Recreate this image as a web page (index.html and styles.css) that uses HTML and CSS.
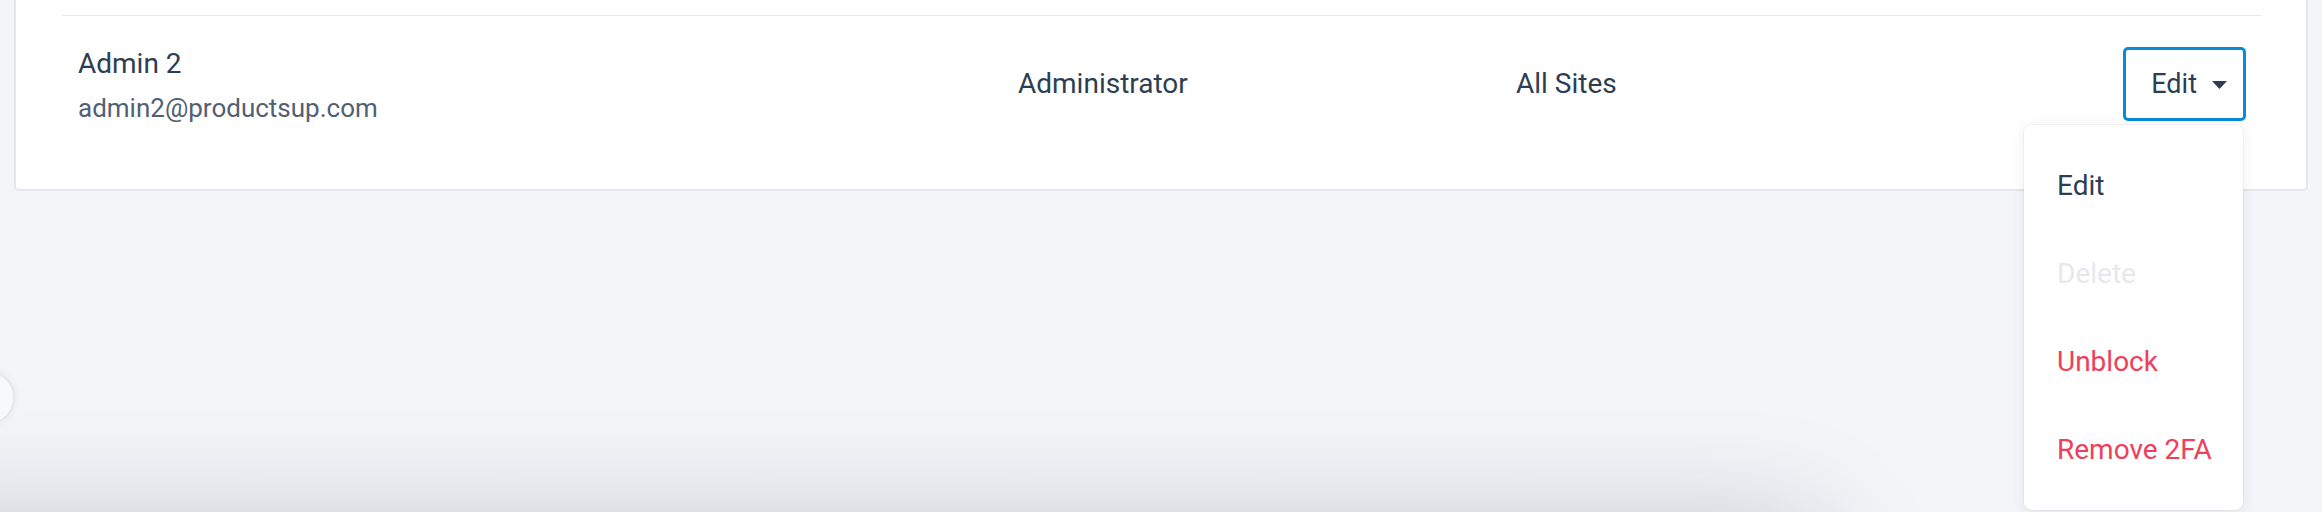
FILE: index.html
```html
<!DOCTYPE html>
<html lang="en">
<head>
<meta charset="utf-8">
<title>Users</title>
<link rel="stylesheet" href="styles.css">
</head>
<body>
<main class="page">
  <section class="card">
    <div class="row">
      <div class="cell user">
        <div class="name">Admin 2</div>
        <div class="email">admin2@productsup.com</div>
      </div>
      <div class="cell role">Administrator</div>
      <div class="cell sites">All Sites</div>
      <div class="cell actions">
        <div class="dropdown">
          <button class="btn" type="button">
            <span>Edit</span>
            <svg class="caret" width="15" height="8" viewBox="0 0 15 8" aria-hidden="true"><path d="M0 0 H15 L7.5 8 Z" fill="currentColor"/></svg>
          </button>
          <ul class="menu">
            <li class="item">Edit</li>
            <li class="item disabled">Delete</li>
            <li class="item danger">Unblock</li>
            <li class="item danger">Remove 2FA</li>
          </ul>
        </div>
      </div>
    </div>
  </section>
</main>
<button class="sidebar-toggle" type="button" aria-label="Toggle sidebar"></button>
<div class="bottom-shadow"></div>
</body>
</html>
```
FILE: styles.css
```css
html, body {
  margin: 0;
  padding: 0;
}
body {
  width: 2322px;
  height: 512px;
  overflow: hidden;
  background: #f3f5f9;
  font-family: Roboto, "Liberation Sans", Arial, sans-serif;
  color: #2c3d51;
  position: relative;
}
.page {
  padding: 0 14px 0 14px;
}
.card {
  background: #fff;
  border: 2px solid #e4e7eb;
  border-top: none;
  border-radius: 0 0 5px 5px;
  padding: 15px 45px 37px 46px;
}
.row {
  border-top: 1px solid #e6e8eb;
  height: 136px;
  padding: 0 15px 0 16px;
  display: grid;
  grid-template-columns: 940px 498px 1fr auto;
  align-items: center;
}
.cell {
  font-size: 28px;
  line-height: 36px;
}
.user {
  padding-top: 4px;
}
.name {
  font-size: 28px;
  line-height: 36px;
  color: #2e3e52;
}
.email {
  margin-top: 8px;
  font-size: 26px;
  line-height: 36px;
  color: #526073;
}
.role, .sites {
  color: #2e3e52;
}
.dropdown {
  position: relative;
}
.btn {
  display: flex;
  align-items: center;
  gap: 15px;
  height: 74px;
  padding: 0 16px 0 25px;
  background: #fff;
  border: 3px solid #0b8ad8;
  border-radius: 5px;
  font-family: inherit;
  font-size: 27px;
  color: #2e3e52;
}
.caret {
  display: block;
  margin-top: 2px;
}
.menu {
  position: absolute;
  top: calc(100% + 4px);
  right: 3px;
  width: 219px;
  margin: 0;
  padding: 17px 0 16px;
  list-style: none;
  background: #fff;
  border-radius: 8px;
  box-shadow: 0 2px 14px rgba(30, 40, 60, 0.09), 0 0 0 1px rgba(30, 40, 60, 0.03);
  z-index: 5;
}
.item {
  height: 88px;
  line-height: 88px;
  padding-left: 33px;
  font-size: 28px;
  color: #2e3e52;
  white-space: nowrap;
}
.item.disabled {
  color: #e6e8ee;
}
.item.danger {
  color: #ee405a;
}
.sidebar-toggle {
  position: absolute;
  left: -40px;
  top: 370px;
  width: 55px;
  height: 55px;
  border-radius: 50%;
  background: #f8f9fb;
  border: 2px solid #e5e7eb;
  box-shadow: 0 0 10px rgba(0, 0, 0, 0.06);
  padding: 0;
}
.bottom-shadow {
  position: absolute;
  left: -200px;
  top: 530px;
  width: 2020px;
  height: 200px;
  border-radius: 20px;
  background: #dcdde0;
  box-shadow: 0 0 120px rgba(20, 25, 40, 0.24);
  z-index: 1;
}
```
